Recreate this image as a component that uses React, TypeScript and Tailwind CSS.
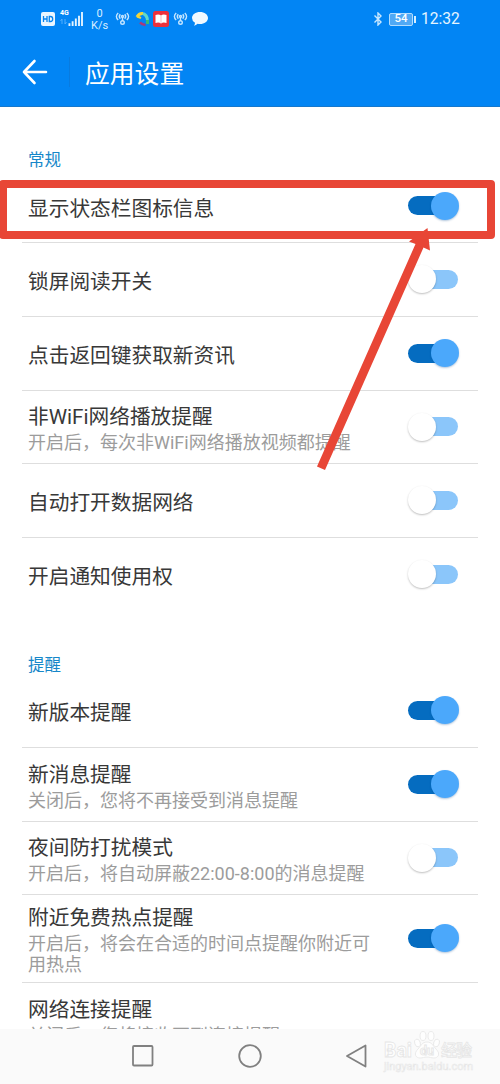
import React from "react";

type Setting = { title: string; note?: string; on: boolean; size: string; last?: boolean };

const general: Setting[] = [
  { title: "显示状态栏图标信息", on: true, size: "h-[73px]" },
  { title: "锁屏阅读开关", on: false, size: "h-[74px]" },
  { title: "点击返回键获取新资讯", on: true, size: "h-[74px]" },
  { title: "非WiFi网络播放提醒", note: "开启后，每次非WiFi网络播放视频都提醒", on: false, size: "h-[73px]" },
  { title: "自动打开数据网络", on: false, size: "h-[74px]" },
  { title: "开启通知使用权", on: false, size: "h-[74px]", last: true },
];

const reminders: Setting[] = [
  { title: "新版本提醒", on: true, size: "h-[74px]" },
  { title: "新消息提醒", note: "关闭后，您将不再接受到消息提醒", on: true, size: "h-[74px]" },
  { title: "夜间防打扰模式", note: "开启后，将自动屏蔽22:00-8:00的消息提醒", on: false, size: "h-[73px]" },
  { title: "附近免费热点提醒", note: "开启后，将会在合适的时间点提醒你附近可用热点", on: true, size: "h-[88px]" },
];

function Toggle({ on }: { on: boolean }) {
  return on ? (
    <div className="flex h-7 w-[51px] shrink-0 items-center">
      <div className="h-[19px] w-9 rounded-l-full bg-[#056cc0]" />
      <div className="-ml-[13px] size-7 shrink-0 rounded-full bg-[#4ba8fb] shadow-[0_1px_2px_rgba(0,70,140,0.3)]" />
    </div>
  ) : (
    <div className="flex h-7 w-[51px] shrink-0 items-center">
      <div className="z-[1] size-7 shrink-0 rounded-full bg-white shadow-[0_1px_2px_rgba(0,0,0,0.25)]" />
      <div className="-ml-[13px] h-[19px] w-[35px] rounded-r-full bg-[#8bc6fa]" />
    </div>
  );
}

function Row({ item }: { item: Setting }) {
  return (
    <div
      className={`mx-[22px] flex shrink-0 items-center justify-between border-b pl-1.5 pr-[19px] ${item.size} ${
        item.last ? "border-transparent" : "border-[#dedede]"
      }`}
    >
      <div className={item.note ? "w-[348px] pt-[3px]" : "pt-[6px]"}>
        <div className="text-[20.7px] leading-[27px] whitespace-nowrap text-[#383838]">{item.title}</div>
        {item.note && <div className="text-[18px] leading-[21px] text-[#9c9c9c] pt-[1px]">{item.note}</div>}
      </div>
      <div className="-ml-5 pb-[1px]">
        <Toggle on={item.on} />
      </div>
    </div>
  );
}

function Antenna() {
  return (
    <svg width="15" height="14" viewBox="0 0 15 14" fill="none" stroke="#c4e5ff" strokeWidth="1.4">
      <path d="M3.2 1Q-.4 4.500 3.200 8M11.800 1Q15.400 4.500 11.800 8M5.300 2.300Q3.300 4.500 5.300 6.700M9.700 2.300Q11.700 4.500 9.700 6.700" />
      <circle cx="7.500" cy="4.500" r="1" />
      <path d="M7.500 6v3" />
      <circle cx="7.500" cy="10.500" r="1.800" />
    </svg>
  );
}

function StatusBar() {
  return (
    <div className="flex h-[38px] items-center pl-[41px] pr-[40px] text-white">
      <svg width="14" height="14" viewBox="0 0 14 14" className="shrink-0">
        <rect width="14" height="14" rx="2" fill="#eaf6ff" />
        <path d="M2.5 4v6M6 4v6M2.5 7H6M8.3 4.5v5h1.2q2.2 0 2.2-2.5T9.5 4.5z" fill="none" stroke="#0784ef" strokeWidth="1.3" />
      </svg>
      <div className="ml-[5px] flex h-4 w-[23px] shrink-0 items-end">
        <div className="h-[17px] w-2 text-[7px] leading-[7px] font-bold">
          4G
          <svg width="7" height="7" viewBox="0 0 7 7" fill="none" stroke="#66b7ff" className="mt-px">
            <path d="M2 6V1L.5 3M5 1v5l1.5-2" strokeWidth=".8" />
          </svg>
        </div>
        <svg width="16" height="15" viewBox="0 0 16 16" fill="#e5f4ff" className="mb-px shrink-0">
          <path d="M0 13h2v3H0zM3.4 11h2v5h-2zM6.8 8h2v8h-2zM10.2 5h2v11h-2zM13.4 1h2v15h-2z" />
        </svg>
      </div>
      <div className="ml-2 w-[17px] shrink-0 pt-[2px] text-center text-[11px] leading-[12px] text-[#d9efff]">
        <div>0</div>
        <div>K/s</div>
      </div>
      <div className="ml-[7px] shrink-0"><Antenna /></div>
      <svg width="15" height="16" viewBox="0 0 15 16" fill="none" strokeWidth="3" className="ml-[5px] shrink-0">
        <path d="M2 6Q4 2 8 2.5" stroke="#f3d538" />
        <path d="M8 2.500Q12 4 12.500 9" stroke="#63d7c6" />
        <path d="M12.500 9v4" stroke="#39bd76" />
        <path d="M2 5.500L6 7" stroke="#f3d538" strokeWidth="2" />
        <path d="M5 11.500Q7 13.500 10.500 14" stroke="#a83a7b" strokeWidth="2.500" />
      </svg>
      <svg width="16" height="16" viewBox="0 0 16 16" className="ml-[3px] shrink-0">
        <rect width="16" height="16" rx="2.5" fill="#ed303b" />
        <path d="M2.500 4Q6 3 8 4.500Q10 3 13.500 4v8Q10 11 8 12.500Q6 11 2.500 12z" fill="white" />
        <path d="M8 4.500v8" stroke="#f9a0a4" strokeWidth=".7" />
      </svg>
      <div className="ml-[4px] shrink-0"><Antenna /></div>
      <svg width="16" height="14" viewBox="0 0 16 14" fill="#f0f9ff" className="ml-[4px] shrink-0">
        <path d="M8 0c4.500 0 8 2.600 8 6s-3.500 6-8 6q-1.200 0-2.400-.3Q4 13.400 2 13.800q1-1.300 1-3Q0 9 0 6c0-3.400 3.500-6 8-6z" />
      </svg>
      <svg width="10" height="14" viewBox="0 0 10 14" fill="none" stroke="#c9e8ff" strokeWidth="1.4" className="ml-auto shrink-0">
        <path d="M1.500 3.500L8 10L5 13V1l3 3-6.500 6.500" />
      </svg>
      <div className="ml-[6px] flex shrink-0 items-center">
        <div className="flex h-[13px] w-[24px] items-center justify-center rounded-[2px] border border-[#b0dcff] bg-[#50a9f5] text-[11.5px] font-medium leading-none">
          54
        </div>
        <div className="ml-px h-[7px] w-[2px] bg-[#d5edff]" />
      </div>
      <span className="ml-[5px] w-[39px] pt-[2px] text-[15.6px] leading-none text-[#e6f5ff]">12:32</span>
    </div>
  );
}

function Watermark() {
  return (
    <svg width="100" height="50" viewBox="0 0 100 50" fill="#fefefe" stroke="#e6e6e6" strokeWidth=".8">
      <text x="3" y="28" fontSize="20" fontWeight="700" textLength="28" lengthAdjust="spacingAndGlyphs">Bai</text>
      <path d="M46 13c5 0 6 4 9 7 5 5 2 9-2 9-3 0-4-1-7-1s-4 1-7 1c-4 0-7-4-2-9 3-3 4-7 9-7z" />
      <ellipse cx="36.500" cy="14" rx="2.800" ry="4" transform="rotate(-20 36.5 14)" />
      <ellipse cx="42" cy="7" rx="3" ry="4.500" />
      <ellipse cx="50" cy="7" rx="3" ry="4.500" />
      <ellipse cx="55.500" cy="14" rx="2.800" ry="4" transform="rotate(20 55.5 14)" />
      <text x="39" y="26" fontSize="12" fontWeight="700" textLength="14" lengthAdjust="spacingAndGlyphs">du</text>
      <text x="60" y="27" fontSize="16" fontWeight="500" textLength="31">经验</text>
      <text x="3" y="41" fontSize="10" strokeWidth=".5" textLength="89" lengthAdjust="spacingAndGlyphs">jingyan.baidu.com</text>
    </svg>
  );
}

export default function App() {
  return (
    <div className="relative flex h-[1084px] w-[500px] flex-col overflow-hidden bg-white font-[Roboto,'Noto_Sans_CJK_SC',sans-serif]">
      <header className="h-[107px] shrink-0 border-b border-[#1678cc] bg-[#0285f4]">
        <StatusBar />
        <div className="flex h-[68px] items-center pl-[22px]">
          <svg width="26" height="26" viewBox="0 0 26 26" fill="none" stroke="white" strokeWidth="2.6" strokeLinecap="round" strokeLinejoin="round">
            <path d="M12.500 2L2 13l10.500 11M2 13h22" />
          </svg>
          <div className="ml-[21px] h-[30px] w-px bg-[#087be0]" />
          <h1 className="ml-[15px] pt-[5px] text-[24.8px] leading-[34px] font-normal text-white">应用设置</h1>
        </div>
      </header>

      <main className="isolate flex h-[922px] shrink-0 flex-col overflow-hidden">
        <h2 className="h-[63px] shrink-0 pt-[42px] pl-7 text-[16.5px] leading-[24px] text-[#1687c9]">常规</h2>
        {general.map((item) => <Row key={item.title} item={item} />)}
        <h2 className="h-[62px] shrink-0 pt-[42px] pl-7 text-[16.5px] leading-[24px] text-[#1687c9]">提醒</h2>
        {reminders.map((item) => <Row key={item.title} item={item} />)}
        <div className="shrink-0 pl-7 pt-[14px]">
          <div className="text-[20.7px] leading-[27px] text-[#383838]">网络连接提醒</div>
          <div className="pt-px text-[18px] leading-[21px] text-[#9c9c9c]">关闭后，您将接收不到连接提醒</div>
        </div>
      </main>

      <nav className="flex h-[55px] shrink-0 items-center justify-between bg-[#fafafa] pb-px pl-[132px] pr-[133px]">
        <svg width="22" height="22" viewBox="0 0 22 22" fill="none" stroke="#808080" strokeWidth="1.8">
          <rect x="1" y="1" width="19.5" height="19.5" rx="1" />
        </svg>
        <svg width="24" height="24" viewBox="0 0 24 24" fill="none" stroke="#808080" strokeWidth="1.8">
          <circle cx="12" cy="12" r="10.8" />
        </svg>
        <svg width="21" height="24" viewBox="0 0 21 24" fill="none" stroke="#808080" strokeWidth="1.8" strokeLinejoin="round">
          <path d="M19.500 1.500v21L1 12z" />
        </svg>
      </nav>

      <div className="absolute top-[1029px] left-[381px]"><Watermark /></div>

      <div className="absolute top-[180px] -left-[1px] h-[59px] w-[496px] rounded-[4px] border-[8px] border-[#e84636]" />
      <svg className="absolute top-[220px] left-[310px]" width="130" height="260" viewBox="310 220 130 260" fill="#e84636">
        <path d="M427.500 228L430 250.500L423.500 247.500L325 470L317 466.500L415.500 244L409 241.500Z" />
      </svg>
    </div>
  );
}
